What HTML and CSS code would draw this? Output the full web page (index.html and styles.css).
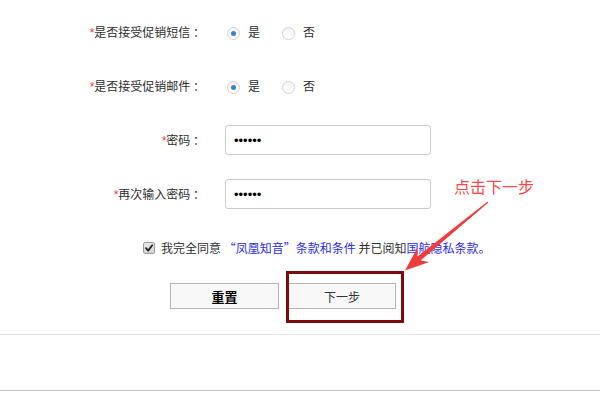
FILE: index.html
```html
<!DOCTYPE html>
<html lang="zh-CN">
<head>
<meta charset="utf-8">
<title>注册</title>
<link rel="stylesheet" href="styles.css">
</head>
<body>
<div class="page">
  <form class="form">
    <div class="row">
      <label class="label"><span class="req">*</span>是否接受促销短信 ：</label>
      <div class="ctrl radios">
        <span class="radio checked"></span><span class="opt">是</span>
        <span class="radio"></span><span class="opt">否</span>
      </div>
    </div>
    <div class="row">
      <label class="label"><span class="req">*</span>是否接受促销邮件 ：</label>
      <div class="ctrl radios">
        <span class="radio checked"></span><span class="opt">是</span>
        <span class="radio"></span><span class="opt">否</span>
      </div>
    </div>
    <div class="row">
      <label class="label"><span class="req">*</span>密码 ：</label>
      <div class="ctrl"><input class="field" type="password" value="123456"></div>
    </div>
    <div class="row">
      <label class="label"><span class="req">*</span>再次输入密码 ：</label>
      <div class="ctrl"><input class="field" type="password" value="123456"></div>
    </div>
    <div class="agree">
      <span class="checkbox"><svg viewBox="0 0 12 12" width="12" height="12"><path d="M3 6.2 L5.2 8.6 L9.2 3.2" fill="none" stroke="#222" stroke-width="1.8" stroke-linecap="round" stroke-linejoin="round"/></svg></span>
      <span class="agree-text">我完全同意 <a class="link">“凤凰知音”条款和条件</a> 并已阅知<a class="link">国航隐私条款。</a></span>
    </div>
    <div class="actions">
      <button type="button" class="btn btn-reset">重置</button>
      <button type="button" class="btn btn-next">下一步</button>
    </div>
  </form>
  <div class="sep sep-light"></div>
  <div class="footer-gap"></div>
  <div class="sep sep-dark"></div>
</div>

<div class="mark-box"></div>
<div class="callout">点击下一步</div>
<svg class="arrow" width="600" height="400" viewBox="0 0 600 400">
  <polygon fill="#f23b3b" points="488.4,202.5 420.6,260.5 429.3,261.9 405,270.5 417.6,247.5 417.4,256.6 487.6,201.5"/>
</svg>
</body>
</html>
```

FILE: styles.css
```css
html, body {
  margin: 0;
  padding: 0;
  background: #ffffff;
}

body {
  font-family: "Noto Sans CJK SC", "Liberation Sans", sans-serif;
  font-size: 12px;
  color: #2e2e2e;
  width: 600px;
  height: 400px;
  overflow: hidden;
  position: relative;
}

.form {
  padding-top: 5px;
}

.row {
  display: grid;
  grid-template-columns: 205px 1fr;
  column-gap: 20px;
  height: 54px;
  align-items: center;
}

.label {
  text-align: right;
  white-space: nowrap;
  line-height: 16px;
}

.req {
  color: #e8383d;
  font-family: "Liberation Sans", sans-serif;
}

.ctrl {
  display: flex;
  align-items: center;
}

.radios {
  padding-left: 2px;
  padding-top: 2px;
}

.radio {
  width: 13px;
  height: 13px;
  box-sizing: border-box;
  border: 1px solid #d2d2d2;
  border-radius: 50%;
  background: linear-gradient(#f4f4f4, #ffffff);
  margin-right: 8px;
  display: flex;
  align-items: center;
  justify-content: center;
}

.radio.checked::after {
  content: "";
  width: 5px;
  height: 5px;
  border-radius: 50%;
  background: #3d7fd4;
}

.opt {
  margin-right: 22px;
  line-height: 16px;
  margin-top: -2px;
}

.field {
  width: 206px;
  height: 30px;
  box-sizing: border-box;
  border: 1px solid #cacaca;
  border-radius: 3px;
  padding: 0 8px;
  font-family: "Liberation Sans", sans-serif;
  font-size: 13px;
  color: #000;
  background: #fff;
  outline: none;
}

.agree {
  height: 54px;
  display: flex;
  align-items: center;
  padding-left: 143px;
}

.checkbox {
  width: 12px;
  height: 12px;
  box-sizing: border-box;
  border: 1px solid #9a9a9a;
  border-radius: 2px;
  background: linear-gradient(#e9e9e9, #d4d4d4);
  margin-right: 6px;
  display: flex;
  align-items: center;
  justify-content: center;
}

.checkbox svg {
  display: block;
  flex: none;
}

.agree-text {
  line-height: 16px;
  white-space: nowrap;
}

.link {
  color: #2b2be6;
  text-decoration: none;
}

.actions {
  display: flex;
  gap: 9px;
  padding-left: 170px;
  margin-top: 8px;
}

.btn {
  height: 26px;
  box-sizing: border-box;
  border: 1px solid #b3b3b3;
  background: #f8f8f8;
  font-family: "Noto Sans CJK SC", sans-serif;
  font-size: 12px;
  color: #222;
  padding: 0;
  margin: 0;
  border-radius: 0;
}

.btn-reset {
  width: 109px;
  font-weight: bold;
  font-size: 13px;
  color: #000;
}

.btn-next {
  width: 108px;
  color: #333;
}

.sep {
  height: 1px;
  width: 100%;
}

.sep-light {
  margin-top: 25px;
  background: #e6e6e6;
}

.footer-gap {
  height: 55px;
}

.sep-dark {
  background: #c4c4c4;
}

.mark-box {
  position: absolute;
  left: 286px;
  top: 271px;
  width: 118px;
  height: 52px;
  box-sizing: border-box;
  border: 3px solid #7e0b0b;
}

.callout {
  position: absolute;
  left: 454px;
  top: 176px;
  font-size: 16px;
  line-height: 20px;
  color: #ff4646;
  white-space: nowrap;
}

.arrow {
  position: absolute;
  left: 0;
  top: 0;
  pointer-events: none;
}
```
